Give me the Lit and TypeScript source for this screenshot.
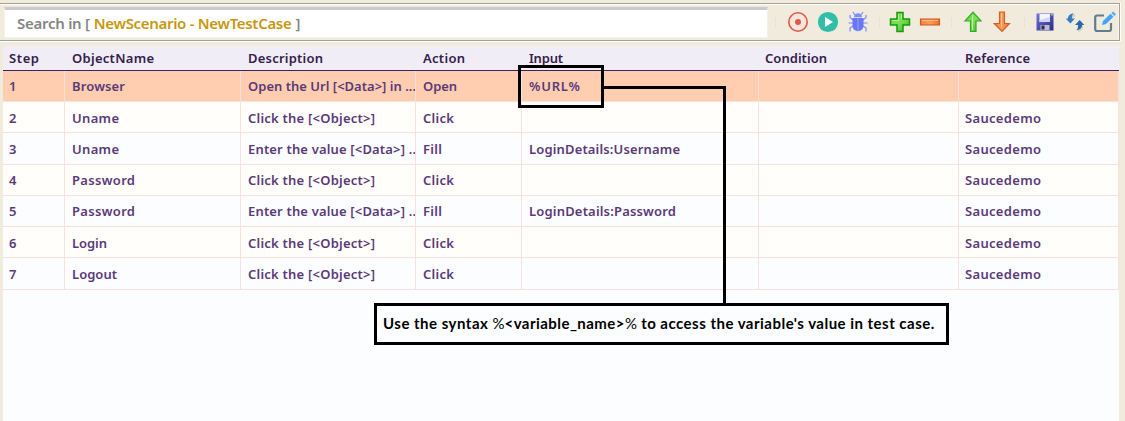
import { LitElement, html, svg, css } from "lit";
import { customElement, property } from "lit/decorators.js";
import { styleMap } from "lit/directives/style-map.js";

const ctx = document.createElement("canvas").getContext("2d")!;

/** A run of text tracked so that it spans the given number of pixels. */
@customElement("tracked-text")
class TrackedText extends LitElement {
  @property() text = "";
  @property({ type: Number }) span = 0;
  @property() font = "600 13px 'Noto Sans'";
  static styles = css`
    :host { display: inline-block; white-space: pre; }
  `;
  render() {
    ctx.font = this.font;
    const natural = ctx.measureText(this.text).width;
    const spacing = (this.span - natural) / Math.max(1, this.text.length - 1);
    return html`<span style=${styleMap({ font: this.font + ", sans-serif", letterSpacing: this.text.length > 1 ? spacing.toFixed(3) + "px" : "0" })}>${this.text}</span>`;
  }
}

type Cell = [string, number] | null;
const headers: Cell[] = [["Step", 30], ["ObjectName", 82], ["Description", 75], ["Action", 42], ["Input", 34], ["Condition", 62], ["Reference", 65]];
const click: Cell = ["Click the [<Object>]", 127];
const enter: Cell = ["Enter the value [<Data>] ..", 168];
const clickAction: Cell = ["Click", 31];
const fill: Cell = ["Fill", 19];
const ref: Cell = ["Saucedemo", 76];
const rows: Cell[][] = [
  [["1", 8], ["Browser", 53], ["Open the Url [<Data>] in ...", 168], ["Open", 34], ["%URL%", 51], null, null],
  [["2", 8], ["Uname", 47], click, clickAction, null, null, ref],
  [["3", 8], ["Uname", 47], enter, fill, ["LoginDetails:Username", 151], null, ref],
  [["4", 8], ["Password", 63], click, clickAction, null, null, ref],
  [["5", 8], ["Password", 63], enter, fill, ["LoginDetails:Password", 147], null, ref],
  [["6", 8], ["Login", 35], click, clickAction, null, null, ref],
  [["7", 8], ["Logout", 45], click, clickAction, null, null, ref],
];

const icons: Record<string, unknown> = {
  record: svg`<circle cx="11" cy="11" r="9.2" fill="#f6e6dc" stroke="#e2574c" stroke-width="1.6"/><circle cx="11" cy="11" r="3" fill="#e2574c"/>`,
  play: svg`<circle cx="11" cy="11" r="10.1" fill="#32bea6"/><path d="M8 6v10l8-5z" fill="#fff"/>`,
  bug: svg`<g fill="none" stroke="#7d8af7" stroke-width="1.2"><path d="M8 4 6 1M14 4l2-3M6 9 3 6.500V4M16 9l3-2.500V4M6 12H1.500M16 12h4.500M6 15l-3 2V20.500M16 15l3 2V20.500"/></g><path d="M7 6.300c0-5.300 8-5.300 8 0z" fill="#7d8cff"/><path d="M5.500 7h11v7.500c0 7.500-11 7.500-11 0z" fill="#6677f8"/><path d="M11 7v13" stroke="#98a4ff" stroke-width="1"/>`,
  plus: svg`<path d="M8 1.500h6v6.500h6.500v6H14v6.500H8V14H1.500V8H8z" fill="url(#g)" stroke="#159b0b" stroke-width="1.5"/><path d="M9.500 3v6.500H3.200M12.400 3v5" fill="none" stroke="#b4f09a" stroke-width="1"/>`,
  minus: svg`<path d="M1.500 8h19v6h-19z" fill="url(#o)" stroke="#cc5b17" stroke-width="1.2"/><path d="M3 9.500h16" stroke="#ffb888"/>`,
  up: svg`<path d="M11 1.200 19 10h-5v10.500H8.500V10H3z" fill="url(#g)" stroke="#36a927" stroke-width="1.2"/><path d="M10.500 4v15" stroke="#b7f3a4"/>`,
  down: svg`<path d="M7.500 1h5v11.500h5L10 20.500 2.200 12.500h5.300z" fill="url(#o)" stroke="#cf6420" stroke-width="1.2"/><path d="M9.500 2.500v14" stroke="#ffc49b"/>`,
  save: svg`<path d="M2.500 2.500h17v17h-17z" fill="url(#b)"/><path d="M5.500 3h10.500v8H5.500z" fill="#f2f5ff"/><path d="M5.500 9 16 6v5H5.500z" fill="#cdd6f4"/><path d="M6.500 14h9v5h-9z" fill="#b8bdcb"/><path d="M7.500 14.500h3v4h-3z" fill="#292c54"/><path d="M18 3v1.500" stroke="#fff"/>`,
  refresh: svg`<g transform="translate(1 1)" fill="none" stroke="#d6d1c6" stroke-width="3"><path d="M10 3C6 4 5 6 5.500 9M13 18.500c3-1 4-3 3.500-6"/></g><path d="M9.500 2.200C5.500 3 3.700 5 4 7.500H1.700l4.600 5 4.700-5H8C7.800 5.500 8.300 4 9.500 2.200z" fill="#347fc0"/><path d="M12.500 19.500c4-1 5.800-3 5.500-5.500h2.300l-4.600-5-4.700 5h3c.2 2-.3 4-1.500 5.500z" fill="#2968ad"/>`,
  edit: svg`<path d="M10 4.500H3.200a2 2 0 0 0-2 2V18a2 2 0 0 0 2 2H15a2 2 0 0 0 2-2v-6" fill="none" stroke="#607d8b" stroke-width="2.200"/><path d="M8 14l1-4 7.500-7.300 3 3L12 13z" fill="#42a5f5"/><path d="m17.300 2 1.700-1.600 3 2.800-1.700 1.700z" fill="#55acf5"/>`,
};

@customElement("tool-icon")
class ToolIcon extends LitElement {
  @property() name = "";
  static styles = css`
    :host { display: flex; justify-content: center; flex: 0 0 30px; }
    svg { display: block; flex: none; overflow: visible; }
  `;
  render() {
    return html`<svg width="22" height="22" viewBox="0 0 22 22">
      <defs>
        <linearGradient id="g" x2="1" y2="1"><stop stop-color="#5bd43a"/><stop offset=".5" stop-color="#7fdf59"/><stop offset="1" stop-color="#37b51f"/></linearGradient>
        <linearGradient id="o" x2="1"><stop stop-color="#f7803b"/><stop offset=".5" stop-color="#ff9a5c"/><stop offset="1" stop-color="#ef6e25"/></linearGradient>
        <linearGradient id="b" x2="1" y2="1"><stop stop-color="#7474d6"/><stop offset="1" stop-color="#29298b"/></linearGradient>
      </defs>${icons[this.name]}</svg>`;
  }
}

@customElement("app-root")
class AppRoot extends LitElement {
  static styles = css`
    :host { display: flex; flex-direction: column; position: relative; box-sizing: border-box; width: 1125px; height: 421px; overflow: hidden; background: #f1ebde; padding-top: 3px; font: 500 13px "Noto Sans", sans-serif; }
    .bar { box-sizing: border-box; display: flex; align-items: center; width: 1120px; height: 38px; flex: none; border: solid #a5a198; border-width: 1px 1px 1px 0; box-shadow: inset 0 1px #fff, inset -1px 0 #f8f5ee, 0 1px #fff, 1px 0 #fff; }
    .search { box-sizing: border-box; width: 764px; flex: none; height: 31px; margin-left: 4px; padding: 0 0 0 12px; border: 1px solid #f5f2ea; border-top: 3px solid #cacaca; background: #fff; color: #858585; display: flex; align-items: center; border-radius: 1px; white-space: pre; }
    .scope { color: #c79810; margin: 0 4px 0 4px; }
    .sep { box-sizing: border-box; flex: 0 0 13px; display: flex; justify-content: center; }
    .sep::after { content: ""; height: 9px; border-left: 1px dotted #e2dccf; }
    .sep.first { flex-basis: 15px; }
    .sep.slim { flex-basis: 12px; }
    .grid { width: 1116px; margin: 5px 0 0 3px; flex: 1; background: #fbfdff; }
    .row { display: grid; grid-template-columns: 62px 176px 175px 106px 237px 200px 160px; box-sizing: border-box; border-bottom: 1px solid #f7e1db; height: 31px; color: #5b3a78; background: #fbfdff; }
    .row:nth-child(odd) { background: #fffefa; }
    .row.tall { height: 32px; }
    .row.low .cell { padding-top: 2px; }
    .row.head { height: 25px; background: #f0edf7; border-color: #3b2260; color: #35204a; }
    .row.on { background: #ffceb1; }
    .cell { border-right: 1px solid #f7e1db; padding-left: 7px; display: flex; align-items: center; overflow: hidden; white-space: nowrap; }
    .cell:first-child, .cell:nth-child(n + 6) { padding-left: 6px; }
    .head .cell { border-color: transparent; }
    .mark { position: absolute; left: 518px; top: 65px; width: 80px; height: 37px; border: 3px solid #000; }
    .wire { position: absolute; left: 604px; top: 86px; width: 119px; height: 218px; border: solid #000; border-width: 3px 3px 0 0; }
    .note { position: absolute; box-sizing: border-box; left: 374px; top: 303px; width: 575px; height: 42px; border: 3px solid #000; padding: 0 0 2px 6px; display: flex; align-items: center; color: #000; background: #fbfdff; }
  `;
  private row(cells: Cell[], cls: string) {
    return html`<div class="row ${cls}">${cells.map((c) => html`<div class="cell">${c ? html`<tracked-text text=${c[0]} span=${c[1]}></tracked-text>` : ""}</div>`)}</div>`;
  }
  render() {
    const f = "600 15px 'Noto Sans'";
    const bold = "700 15px 'Lato'";
    const kinds = ["on", "low", "tall", "", "", "low", "tall"];
    return html`
      <div class="bar">
        <div class="search"><tracked-text font=${f} text="Search in [" span="73"></tracked-text><tracked-text class="scope" font=${f} text="NewScenario - NewTestCase" span="198"></tracked-text><tracked-text font=${f} text="]" span="5"></tracked-text></div>
        <i class="sep first"></i>
        <tool-icon name="record"></tool-icon><tool-icon name="play"></tool-icon><tool-icon name="bug"></tool-icon>
        <i class="sep slim"></i>
        <tool-icon name="plus"></tool-icon><tool-icon name="minus"></tool-icon>
        <i class="sep"></i>
        <tool-icon name="up"></tool-icon><tool-icon name="down"></tool-icon>
        <i class="sep slim"></i>
        <tool-icon name="save"></tool-icon><tool-icon name="refresh"></tool-icon><tool-icon name="edit"></tool-icon>
      </div>
      <div class="grid">
        ${this.row(headers, "head")}
        ${rows.map((r, i) => this.row(r, kinds[i]))}
      </div>
      <div class="wire"></div>
      <div class="mark"></div>
      <div class="note"><tracked-text font=${bold} text="Use the syntax " span="109"></tracked-text><tracked-text font="400 15px 'Lato'" text="%"></tracked-text><tracked-text font=${bold} text="<variable_name>" span="120"></tracked-text><tracked-text font="400 15px 'Lato'" text="%"></tracked-text><tracked-text font=${bold} text=" to access the variable's value in test case." span="298"></tracked-text></div>`;
  }
}
